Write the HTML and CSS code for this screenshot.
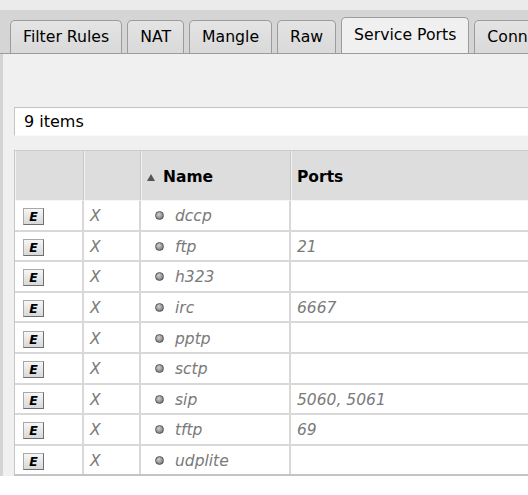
FILE: index.html
```html
<!DOCTYPE html>
<html>
<head>
  <meta charset="utf-8">
  <link rel="stylesheet" href="styles.css">
</head>
<body>
  <div class="topstrip"></div>
  <div class="tabs">
    <div class="tab">Filter Rules</div>
    <div class="tab">NAT</div>
    <div class="tab">Mangle</div>
    <div class="tab">Raw</div>
    <div class="tab active">Service Ports</div>
    <div class="tab">Connections</div>
  </div>
  <div class="panel">
    <div class="count">9 items</div>
    <table class="grid">
      <thead>
        <tr>
          <th class="c-edit"></th>
          <th class="c-del"></th>
          <th class="c-name"><span class="sort"></span>Name</th>
          <th class="c-ports">Ports</th>
        </tr>
      </thead>
      <tbody>
        <tr><td><span class="btn-e">E</span></td><td class="del">X</td><td><span class="dot"></span>dccp</td><td></td></tr>
        <tr><td><span class="btn-e">E</span></td><td class="del">X</td><td><span class="dot"></span>ftp</td><td>21</td></tr>
        <tr><td><span class="btn-e">E</span></td><td class="del">X</td><td><span class="dot"></span>h323</td><td></td></tr>
        <tr><td><span class="btn-e">E</span></td><td class="del">X</td><td><span class="dot"></span>irc</td><td>6667</td></tr>
        <tr><td><span class="btn-e">E</span></td><td class="del">X</td><td><span class="dot"></span>pptp</td><td></td></tr>
        <tr><td><span class="btn-e">E</span></td><td class="del">X</td><td><span class="dot"></span>sctp</td><td></td></tr>
        <tr><td><span class="btn-e">E</span></td><td class="del">X</td><td><span class="dot"></span>sip</td><td>5060, 5061</td></tr>
        <tr><td><span class="btn-e">E</span></td><td class="del">X</td><td><span class="dot"></span>tftp</td><td>69</td></tr>
        <tr><td><span class="btn-e">E</span></td><td class="del">X</td><td><span class="dot"></span>udplite</td><td></td></tr>
      </tbody>
    </table>
  </div>
</body>
</html>
```

FILE: styles.css
```css
body {
  margin: 0;
  width: 528px;
  overflow: hidden;
  background-color: white;
  font-family: "DejaVu Sans", Verdana, sans-serif;
  color: black;
}

.topstrip {
  height: 10px;
  background-color: #ebebeb;
}

.tabs {
  display: flex;
  align-items: flex-end;
  gap: 5px;
  height: 43px;
  padding-left: 10px;
  background-color: #d5d5d5;
  border-bottom: 1px solid #9c9c9c;
  white-space: nowrap;
  overflow: hidden;
}

.tab {
  flex-shrink: 0;
  height: 32px;
  line-height: 32px;
  padding: 0 12px;
  font-size: 15.7px;
  background: linear-gradient(#e4e4e4, #d9d9d9);
  border: 1px solid #9c9c9c;
  border-bottom: none;
  border-radius: 5px 5px 0 0;
}

.tab.active {
  height: 36px;
  line-height: 34px;
  margin-bottom: -1px;
  background: #f0f0f0;
}

.panel {
  height: 422px;
  box-sizing: border-box;
  padding: 53px 0 0 11px;
  background-color: #f0f0f0;
  border-left: 3px solid #d4d4d4;
}

.count {
  height: 27px;
  line-height: 27px;
  padding-left: 9px;
  font-size: 16px;
  background-color: white;
  border-top: 1px solid #c4c4c4;
  border-left: 1px solid #c4c4c4;
  border-bottom: 1px solid #fafafa;
  margin-bottom: 14px;
}

.grid {
  border-collapse: separate;
  border-spacing: 0;
  width: 600px;
  border-left: 1px solid #c6c6c6;
  border-bottom: 2px solid #c4c4c4;
}

.grid th {
  height: 47px;
  padding: 2px 6px 0;
  text-align: left;
  font-size: 15.5px;
  font-weight: bold;
  background-color: #dddddd;
  border-top: 1px solid #cccccc;
  border-right: 1px solid #c9c9c9;
  box-shadow: inset 1px 0 #f2f2f2;
  border-bottom: 1px solid #f6f6f6;
}

.c-edit { width: 56px; }
.c-del { width: 44px; }
.c-name { width: 137px; }

.sort {
  display: inline-block;
  width: 0;
  height: 0;
  border-left: 4px solid transparent;
  border-right: 4px solid transparent;
  border-bottom: 7px solid #555;
  margin-right: 8px;
  vertical-align: 1px;
}

.grid td {
  height: 26.6px;
  padding: 2px 6px 0;
  background-color: white;
  border-bottom: 2px solid #d8d8d8;
  border-right: 2px solid #d8d8d8;
  font-size: 15.5px;
  font-style: italic;
  color: #7a7a7a;
}

.grid tbody tr:last-child td {
  border-bottom: none;
}

.grid td:first-child {
  padding-left: 8px;
}

.btn-e {
  display: inline-block;
  width: 19px;
  height: 15px;
  line-height: 15px;
  text-align: center;
  font-size: 12.5px;
  font-weight: bold;
  font-style: italic;
  color: black;
  background: linear-gradient(#f6f6f6, #d8d8d8);
  border: 1px solid #a8a8a8;
  border-right-color: #6f6f6f;
  border-bottom-color: #6f6f6f;
  vertical-align: middle;
}

.dot {
  display: inline-block;
  width: 9px;
  height: 9px;
  box-sizing: border-box;
  margin: 0 11px 0 8px;
  border-radius: 50%;
  border: 1px solid #555;
  background: radial-gradient(circle at 40% 35%, #d0d0d0, #8a8a8a 65%, #5a5a5a);
  vertical-align: 1px;
}
```
